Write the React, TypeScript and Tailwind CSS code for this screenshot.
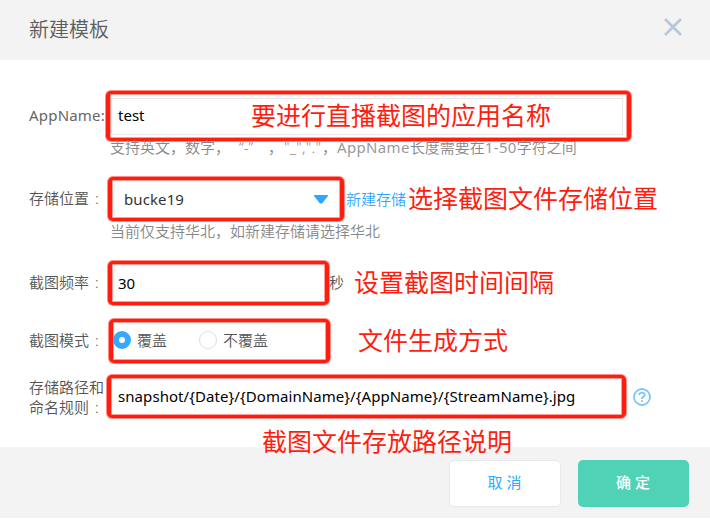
import type { ReactNode } from 'react';

const Mark = ({ className, children }: { className: string; children?: ReactNode }) => (
  <div
    className={`flex shrink-0 items-center rounded-[5px] border-x-4 border-y-[3px] border-[#ff1d10] bg-white shadow-[0_0_0_1px_#ff1d1080,inset_0_0_0_1px_#ff1d1070] ${className}`}
  >
    {children}
  </div>
);

const Label = ({ children }: { children: ReactNode }) => (
  <span className="flex w-[79px] shrink-0 pb-[2px] font-[350] text-[#555]">
    {children}
    <span className="w-[15px] pl-[6px]">:</span>
  </span>
);

const Note = ({ className, children }: { className: string; children: ReactNode }) => (
  <span className={`shrink-0 pb-[2px] text-[25px] leading-[30px] text-[#ff1d10] ${className}`}>{children}</span>
);

export default function App() {
  return (
    <div className="flex h-[519px] w-[710px] flex-col overflow-hidden bg-white font-['Noto_Sans','Noto_Sans_CJK_SC',sans-serif] text-[15px] leading-[20px] whitespace-nowrap">
      <header className="flex h-[60px] shrink-0 items-center justify-between bg-[#f3f3f3] pr-[28px] pl-[29px]">
        <h1 className="text-[20px] font-[350] text-[#5c5c5c]">新建模板</h1>
        <svg width="18" height="18" viewBox="0 0 18 18" className="-mt-[7px]" stroke="#b5c7d9" strokeWidth="2.6">
          <path d="M1 1 17 17M17 1 1 17" />
        </svg>
      </header>

      <main className="h-[387px] shrink-0 pl-[29px]">
        <div className="flex items-center pt-[31px]">
          <span className="w-[77px] shrink-0 pb-[3px] tracking-[0.2px] text-[#666]">AppName:</span>
          <Mark className="h-[50px] w-[525px] pl-px">
            <div className="flex h-[37px] w-[512px] items-center border border-[#e8e8ec] pl-[6px]">
              <span className="w-[133px] pb-[2px] text-black">test</span>
              <Note className="">要进行直播截图的应用名称</Note>
            </div>
          </Mark>
        </div>
        <p className="mt-[-4px] flex h-[20px] pl-[81px] font-[350] text-[#888]">
          <span className="w-[129px]">支持英文，数字，</span>
          <span className="w-[29px]">“-”</span>
          <span className="w-[16px]">，</span>
          <span className="w-[38px] tracking-[0.3px]">"_","."</span>
          <span className="w-[15px]">，</span>
          <span className="font-normal tracking-[0.35px] text-[#999]">AppName</span>
          <span>长度需要在</span>
          <span className="font-normal tracking-[0.35px] text-[#999]">1-50</span>
          <span>字符之间</span>
        </p>

        <div className="mt-[20px] flex items-center">
          <Label>存储位置</Label>
          <Mark className="h-[44px] w-[236px] justify-between pr-[12px] pl-[12px]">
            <span className="pb-px tracking-[0.1px] text-[#333]">bucke19</span>
            <svg width="14" height="9" viewBox="0 0 14 9" fill="#2ea8ff">
              <path d="M0 0H14V1L8.500 8Q7 9 5.500 8L0 1Z" />
            </svg>
          </Mark>
          <span className="ml-[2px] font-[350] text-[#2ea8ff]">新建存储</span>
          <Note className="ml-[2px]">选择截图文件存储位置</Note>
        </div>
        <p className="pl-[81px] font-[350] text-[#888]">当前仅支持华北，如新建存储请选择华北</p>

        <div className="mt-[20px] flex items-center">
          <Label>截图频率</Label>
          <Mark className="h-[44px] w-[221px] pl-[6px]">
            <span className="text-black">30</span>
          </Mark>
          <span className="pb-[2px] font-[350] text-[#555]">秒</span>
          <Note className="ml-[10px]">设置截图时间间隔</Note>
        </div>

        <div className="mt-[14px] flex items-center">
          <Label>截图模式</Label>
          <Mark className="ml-px h-[44px] w-[221px] pb-[2px] font-[350] text-[#555]">
            <span className="size-[18px] rounded-full border-[6px] border-[#36a9ff] bg-white" />
            <span className="ml-[6px]">覆盖</span>
            <span className="ml-[32px] size-[18px] rounded-full border border-[#d6e0ea]" />
            <span className="ml-[6px]">不覆盖</span>
          </Mark>
          <Note className="ml-[28px]">文件生成方式</Note>
        </div>

        <div className="mt-[12px] flex items-center">
          <span className="w-[78px] shrink-0 font-[350] text-[#555]">
            存储路径和
            <br />
            <span className="flex">
              命名规则<span className="pl-[6px]">:</span>
            </span>
          </span>
          <Mark className="h-[43px] w-[519px] pl-[7px]">
            <span className="pb-px tracking-[0.07px] text-black">{'snapshot/{Date}/{DomainName}/{AppName}/{StreamName}.jpg'}</span>
          </Mark>
          <svg width="18" height="18" viewBox="0 0 18 18" className="ml-[7px]" fill="none" stroke="#7cc6fb">
            <circle cx="9" cy="9" r="8" strokeWidth="1.800" />
            <path d="M6.200 7.100V6.500Q6.500 4.600 9 4.600T11.800 6.800Q11.800 8 10.200 8.900Q9 9.600 9 11M9 12.300V14" strokeWidth="1.800" />
          </svg>
        </div>
        <div className="mt-[8px] flex pl-[233px]">
          <Note className="relative">截图文件存放路径说明</Note>
        </div>
      </main>

      <footer className="flex h-[71px] shrink-0 items-start justify-end gap-[17px] bg-[#f3f3f3] pt-[13px] pr-[21.500px]">
        <button className="h-[47px] w-[112px] rounded-[5px] border border-[#e8e8e8] bg-white pb-[3px] text-[#2ea8ff]">取 消</button>
        <button className="h-[47px] w-[111px] rounded-[5px] bg-[#50d2b6] pb-[3px] font-medium text-white">确 定</button>
      </footer>
    </div>
  );
}
